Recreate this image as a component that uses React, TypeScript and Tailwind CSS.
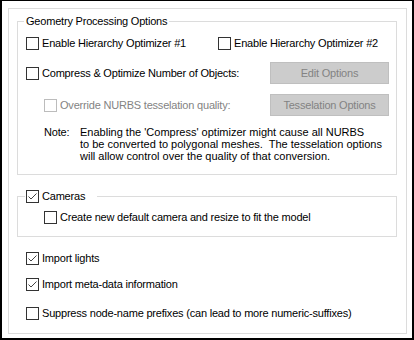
import React from "react";

function Box({ checked, disabled }: { checked?: boolean; disabled?: boolean }) {
  return (
    <span
      className={`flex h-[13px] w-[13px] shrink-0 items-center justify-center border bg-white ${
        disabled ? "border-[#bcbcbc]" : "border-[#333333]"
      }`}
    >
      {checked && (
        <svg width="11" height="11" viewBox="0 0 11 11" fill="none">
          <path d="M1.5 5.5 L4 8 L9.5 2.5" stroke="#444444" strokeWidth="1" />
        </svg>
      )}
    </span>
  );
}

function Check({
  label,
  checked,
  disabled,
  className,
}: {
  label: string;
  checked?: boolean;
  disabled?: boolean;
  className?: string;
}) {
  return (
    <div className={`flex h-[13px] items-center gap-[3px] ${className ?? ""}`}>
      <Box checked={checked} disabled={disabled} />
      <span className={`whitespace-nowrap ${disabled ? "text-[#838383]" : "text-black"}`}>{label}</span>
    </div>
  );
}

function GrayButton({ children }: { children: React.ReactNode }) {
  return (
    <div className="flex h-[22px] w-[119px] items-center justify-center border border-[#bfbfbf] bg-[#cccccc] text-[#838383]">
      {children}
    </div>
  );
}

export default function App() {
  return (
    <div
      className="h-[340px] w-[414px] border-x-2 border-t border-b-2 border-black bg-white pt-[7px] pr-[5px] pb-[4px] pl-[6px] text-[11px] leading-[13px] tracking-[-0.2px]"
      style={{ fontFamily: '"Liberation Sans", Arial, sans-serif' }}
    >
      <div className="h-full border border-[#dcdcdc] pt-[5px] pr-[9px] pl-[8px]">
        {/* geometry group */}
        <fieldset className="border border-[#dcdcdc]">
          <legend className="ml-[6px] px-[2px] leading-[15px]">Geometry Processing Options</legend>
          <div className="pt-[8px] pb-[12px] pl-[8px]">
            <div className="flex">
              <Check className="w-[192px]" label="Enable Hierarchy Optimizer #1" />
              <Check label="Enable Hierarchy Optimizer #2" />
            </div>
            <div className="mt-[12px] flex items-center">
              <Check className="w-[244px]" label="Compress & Optimize Number of Objects:" />
              <GrayButton>Edit Options</GrayButton>
            </div>
            <div className="mt-[10px] flex items-center">
              <div className="w-[244px] pl-[18px]">
                <Check disabled label="Override NURBS tesselation quality:" />
              </div>
              <GrayButton>Tesselation Options</GrayButton>
            </div>
            <div className="mt-[10px] flex pl-[18px]">
              <span className="w-[36px] shrink-0">Note:</span>
              <p className="leading-[12px] tracking-normal">
                Enabling the 'Compress' optimizer might cause all NURBS
                <br />
                to be converted to polygonal meshes.&nbsp; The tesselation options
                <br />
                will allow control over the quality of that conversion.
              </p>
            </div>
          </div>
        </fieldset>

        {/* cameras group */}
        <fieldset className="mt-[15px] border border-[#dcdcdc]">
          <legend className="ml-[7px] pr-[12px] pl-[1px]">
            <Check checked label="Cameras" />
          </legend>
          <div className="pt-[8px] pb-[12px] pl-[26px]">
            <Check label="Create new default camera and resize to fit the model" />
          </div>
        </fieldset>

        <div className="flex flex-col pl-[9px]">
          <Check className="mt-[15px]" checked label="Import lights" />
          <Check className="mt-[13px]" checked label="Import meta-data information" />
          <Check className="mt-[16px]" label="Suppress node-name prefixes (can lead to more numeric-suffixes)" />
        </div>
      </div>
    </div>
  );
}
